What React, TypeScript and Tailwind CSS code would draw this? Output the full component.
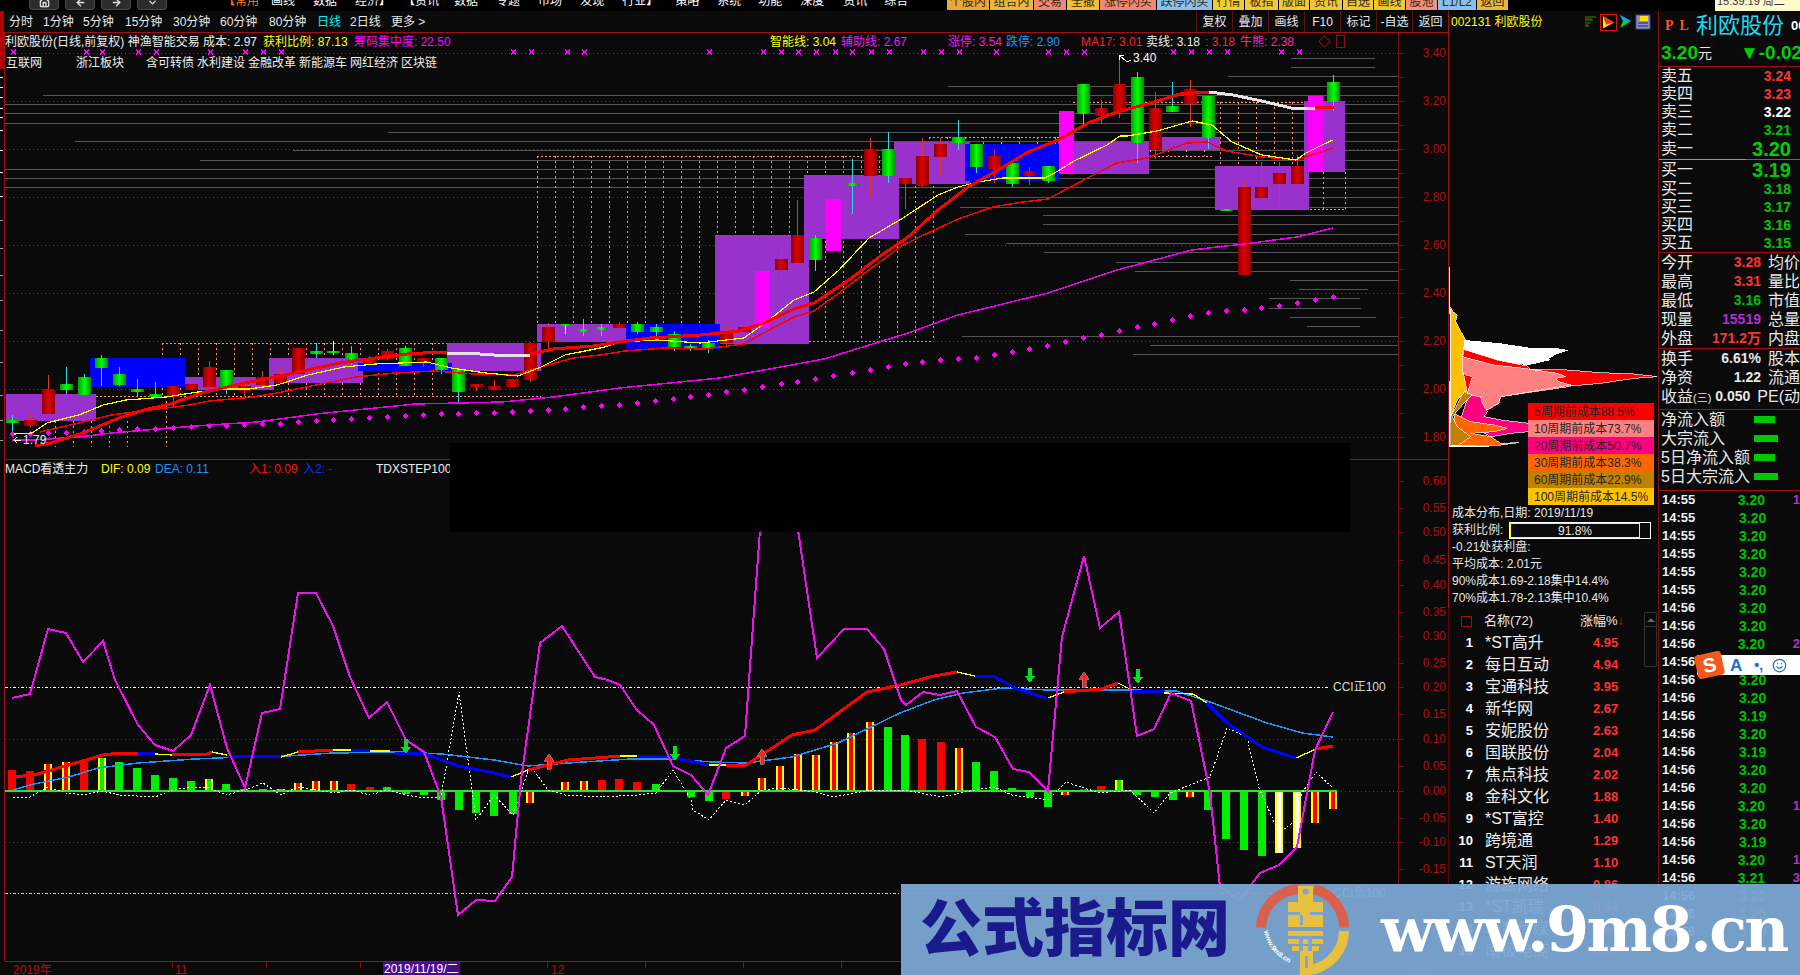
import { House, Smile, ArrowLeft, ArrowRight, ChevronDown } from "lucide-react";

type Pt = [number, number];

const line = (p: Pt[]) => p.map((q) => q.join(",")).join(" ");

// x, high, top, bottom, low, colour
const candles: [number, number, number, number, number, string][] = [
  [12, 415, 420, 423, 433, "g"], [30, 414, 420, 426, 427, "r"], [48, 375, 389, 414, 414, "r"],
  [66, 367, 384, 390, 394, "g"], [84, 374, 377, 395, 395, "g"], [101, 355, 358, 368, 386, "g"],
  [119, 367, 374, 385, 386, "g"], [137, 379, 389, 392, 396, "g"], [155, 382, 394, 397, 397, "g"],
  [173, 386, 386, 397, 406, "r"], [191, 380, 384, 390, 390, "r"], [209, 361, 367, 387, 387, "r"],
  [226, 370, 370, 389, 394, "g"], [244, 386, 386, 391, 397, "r"], [262, 371, 377, 385, 385, "r"],
  [280, 368, 374, 383, 383, "r"], [298, 348, 348, 374, 374, "r"], [316, 343, 351, 354, 358, "g"],
  [333, 341, 351, 352, 355, "w"], [351, 346, 353, 359, 365, "g"], [369, 356, 359, 364, 364, "r"],
  [387, 349, 351, 359, 360, "r"], [405, 346, 348, 366, 366, "g"], [423, 358, 358, 363, 367, "r"],
  [441, 358, 358, 370, 374, "g"], [458, 370, 370, 392, 403, "g"], [476, 384, 384, 387, 391, "r"],
  [494, 380, 386, 390, 390, "r"], [512, 379, 379, 387, 387, "r"], [530, 342, 343, 380, 382, "r"],
  [548, 323, 327, 342, 352, "r"], [565, 324, 324, 325, 334, "w"], [583, 319, 329, 332, 336, "g"],
  [601, 324, 327, 330, 336, "g"], [619, 322, 324, 328, 332, "r"], [637, 322, 324, 332, 334, "g"],
  [656, 324, 327, 332, 336, "g"], [674, 331, 334, 347, 351, "g"], [690, 344, 346, 348, 351, "g"],
  [708, 340, 343, 348, 353, "g"], [726, 325, 331, 343, 347, "r"], [744, 325, 327, 332, 332, "r"],
  [762, 271, 271, 328, 328, "m"], [781, 248, 259, 270, 279, "r"], [797, 200, 235, 263, 269, "r"],
  [815, 235, 238, 260, 271, "g"], [833, 199, 199, 251, 251, "m"], [852, 159, 183, 186, 214, "g"],
  [870, 138, 149, 176, 197, "r"], [888, 132, 149, 176, 183, "g"], [905, 172, 178, 184, 209, "r"],
  [922, 138, 156, 186, 187, "r"], [940, 138, 144, 157, 175, "r"], [958, 120, 137, 143, 150, "g"],
  [976, 144, 144, 167, 173, "g"], [994, 150, 156, 169, 183, "r"], [1012, 163, 163, 184, 187, "g"],
  [1029, 167, 171, 176, 185, "r"], [1048, 166, 166, 181, 183, "g"], [1066, 111, 111, 174, 174, "m"],
  [1083, 84, 84, 114, 124, "g"], [1101, 100, 108, 116, 124, "r"], [1119, 55, 84, 112, 118, "r"],
  [1137, 72, 77, 143, 163, "g"], [1155, 92, 108, 150, 159, "r"], [1172, 82, 106, 112, 112, "g"],
  [1190, 80, 89, 104, 127, "r"], [1208, 96, 96, 138, 149, "g"], [1226, 209, 209, 210, 210, "g"],
  [1244, 181, 187, 275, 275, "r"], [1261, 162, 187, 198, 204, "r"], [1279, 162, 173, 184, 207, "r"],
  [1297, 155, 166, 184, 187, "r"], [1315, 96, 96, 172, 172, "m"], [1333, 75, 82, 102, 111, "g"],
];

const purpleBoxes: [number, number, number, number][] = [
  [6, 394, 96, 421], [185, 377, 274, 390], [269, 358, 363, 383], [447, 343, 541, 371], [537, 324, 626, 342],
  [715, 235, 809, 344], [804, 175, 899, 239], [894, 142, 970, 184], [1058, 142, 1149, 174],
  [1149, 137, 1220, 150], [1215, 166, 1309, 210], [1304, 101, 1345, 172],
];
const blueBoxes: [number, number, number, number][] = [
  [90, 358, 185, 387], [358, 363, 452, 371], [626, 324, 720, 349], [965, 144, 1059, 181],
];

const greyLines: [number, number, number?][] = [
  [58, 1291, 1375], [67, 1291, 1375], [76, 1228], [86, 948], [95, 43], [104, 5], [113, 5], [123, 5], [132, 388],
  [141, 75], [150, 293], [160, 200], [169, 5], [178, 5], [187, 5], [197, 990], [207, 960], [215, 1043], [224, 1043],
  [234, 965], [243, 1006], [252, 1044], [262, 1116], [271, 1135], [280, 1290], [289, 1299, 1368], [298, 1269, 1360],
  [308, 1269, 1361], [317, 1290, 1376], [326, 1307, 1360], [336, 962], [345, 1150], [354, 1133],
];

const maThick: Pt[] = [
  [35, 446], [51, 443], [83, 433], [119, 418], [144, 410], [170, 404], [205, 392], [245, 383], [285, 375], [316, 368],
  [340, 363], [375, 358], [407, 354], [439, 352], [447, 353],
];
const maThick2: Pt[] = [
  [530, 354], [553, 349], [593, 346], [620, 342], [650, 338], [700, 335], [739, 331], [764, 323], [794, 309], [814, 303],
  [849, 280], [879, 257], [908, 237], [938, 210], [968, 187], [998, 170], [1028, 152], [1058, 140], [1088, 123],
  [1117, 112], [1151, 103], [1180, 94], [1209, 92],
];
const maWhite1: Pt[] = [[447, 353], [476, 353], [480, 354], [494, 355], [530, 355]];
const maWhite2: Pt[] = [[1209, 92], [1233, 95], [1262, 101], [1291, 108], [1315, 108]];

const maYellow: Pt[] = [
  [14, 434], [32, 433], [47, 423], [79, 415], [103, 405], [126, 400], [166, 397], [198, 392], [221, 389], [249, 389],
  [277, 385], [308, 375], [344, 367], [375, 364], [427, 362], [451, 368], [486, 373], [518, 376], [541, 367], [565, 355],
  [605, 347], [620, 342], [657, 340], [700, 343], [744, 338], [769, 320], [794, 300], [814, 292], [839, 270], [869, 238],
  [903, 218], [938, 195], [958, 187], [978, 182], [1003, 178], [1045, 178], [1058, 171], [1074, 161], [1107, 145],
  [1120, 136], [1127, 136], [1157, 131], [1192, 121], [1212, 125], [1232, 142], [1262, 155], [1296, 160], [1306, 153],
  [1324, 144], [1333, 140],
];
const maRed: Pt[] = [
  [40, 432], [79, 423], [111, 415], [134, 412], [166, 408], [190, 405], [209, 401], [253, 397], [277, 393], [316, 385],
  [356, 377], [395, 373], [435, 371], [474, 374], [514, 375], [541, 367], [573, 358], [600, 355], [625, 351], [665, 348],
  [704, 349], [744, 344], [769, 330], [794, 317], [814, 311], [839, 293], [869, 270], [903, 245], [928, 233], [958, 219],
  [993, 207], [1023, 202], [1048, 199], [1078, 183], [1117, 163], [1147, 158], [1187, 143], [1207, 142], [1227, 151],
  [1262, 157], [1296, 160], [1333, 148],
];
const maPurple: Pt[] = [
  [12, 440], [32, 440], [79, 437], [111, 433], [170, 428], [209, 425], [257, 422], [316, 414], [415, 404], [502, 402],
  [553, 397], [620, 388], [720, 378], [824, 359], [908, 333], [958, 315], [1048, 293], [1117, 270], [1192, 250],
  [1252, 243], [1297, 237], [1333, 228],
];

const dots: Pt[] = [
  [12, 434], [30, 434], [48, 433], [66, 433], [84, 432], [101, 431], [119, 430], [137, 429], [155, 429], [173, 428],
  [191, 427], [209, 426], [226, 426], [244, 425], [262, 424], [280, 424], [298, 422], [316, 421], [333, 420], [351, 419],
  [369, 418], [387, 417], [405, 416], [423, 415], [441, 414], [458, 414], [476, 413], [494, 413], [512, 412], [530, 411],
  [548, 410], [565, 409], [583, 407], [601, 406], [619, 405], [637, 403], [655, 401], [673, 399], [690, 397], [708, 395],
  [726, 392], [744, 390], [762, 387], [781, 384], [797, 382], [815, 379], [833, 376], [852, 373], [870, 370], [888, 367],
  [905, 364], [922, 362], [940, 360], [958, 359], [976, 358], [994, 355], [1012, 352], [1029, 349], [1047, 346],
  [1065, 342], [1083, 338], [1101, 335], [1119, 331], [1137, 327], [1154, 324], [1172, 320], [1190, 316], [1208, 313],
  [1226, 311], [1244, 310], [1261, 308], [1279, 306], [1297, 303], [1315, 300], [1333, 297],
];

const xMarks = [13, 86, 102, 138, 156, 210, 245, 263, 281, 513, 531, 567, 584, 709, 763, 781, 798, 816, 835, 852, 871, 889, 923, 941, 959, 996, 1048, 1066, 1084, 1173, 1191, 1209, 1227, 1281, 1299];

// x, y end of bar, kind: g green, r red, y red with yellow sides, l green with yellow sides, w white with yellow sides
const macdBars: [number, number, string][] = [
  [12, 770, "r"], [30, 771, "r"], [48, 764, "y"], [66, 762, "y"], [84, 762, "r"], [102, 758, "l"], [119, 762, "g"], [137, 768, "g"],
  [155, 775, "g"], [173, 778, "g"], [191, 781, "g"], [209, 779, "l"], [226, 784, "g"], [244, 789, "g"], [263, 789, "g"], [281, 789, "l"],
  [298, 783, "y"], [316, 781, "y"], [334, 781, "y"], [351, 784, "r"], [370, 787, "r"], [387, 787, "g"], [406, 794, "g"], [424, 795, "g"],
  [441, 800, "g"], [459, 810, "g"], [476, 813, "g"], [494, 816, "g"], [513, 814, "g"], [530, 803, "y"], [548, 790, "y"], [565, 782, "y"],
  [584, 781, "y"], [602, 780, "r"], [619, 779, "r"], [637, 782, "r"], [656, 784, "g"], [691, 797, "g"], [709, 801, "g"], [726, 799, "r"],
  [745, 796, "y"], [762, 778, "y"], [780, 766, "y"], [798, 754, "y"], [816, 755, "y"], [834, 742, "y"], [851, 733, "y"], [870, 722, "y"],
  [888, 727, "g"], [905, 735, "g"], [922, 739, "r"], [941, 742, "r"], [959, 748, "y"], [976, 762, "g"], [994, 771, "g"], [1012, 788, "g"],
  [1030, 797, "g"], [1048, 807, "g"], [1065, 795, "y"], [1084, 789, "r"], [1101, 786, "r"], [1119, 780, "l"], [1137, 795, "g"], [1155, 797, "g"],
  [1173, 800, "g"], [1190, 797, "y"], [1208, 810, "g"], [1226, 839, "g"], [1244, 850, "g"], [1262, 856, "g"], [1279, 853, "w"], [1297, 848, "w"],
  [1315, 823, "y"], [1333, 809, "y"],
];

const cciLine: Pt[] = [
  [12, 698], [30, 694], [48, 629], [66, 633], [83, 662], [103, 641], [115, 680], [138, 725], [155, 745], [173, 751], [191, 735], [210, 685],
  [227, 748], [245, 788], [262, 713], [280, 709], [298, 593], [316, 593], [333, 626], [350, 677], [369, 718], [387, 702], [406, 740], [424, 752],
  [441, 797], [458, 915], [476, 900], [495, 901], [512, 877], [521, 780], [540, 643], [562, 626], [595, 677], [608, 680], [620, 685], [637, 710],
  [654, 725], [673, 766], [691, 775], [708, 795], [726, 748], [745, 736], [749, 680], [760, 530], [798, 530], [817, 658], [844, 629], [867, 629],
  [884, 649], [901, 700], [906, 705], [923, 692], [940, 695], [957, 691], [976, 727], [995, 737], [1013, 769], [1029, 772], [1048, 791],
  [1062, 637], [1084, 556], [1100, 628], [1119, 612], [1137, 736], [1154, 729], [1171, 693], [1191, 701], [1210, 793], [1220, 887],
  [1240, 900], [1260, 873], [1279, 865], [1297, 847], [1315, 750], [1333, 712],
];
const deaLine: Pt[] = [
  [13, 790], [34, 784], [69, 777], [98, 768], [138, 763], [195, 759], [241, 757], [287, 756], [333, 753], [402, 752], [442, 754], [494, 760],
  [528, 766], [568, 763], [631, 759], [672, 759], [712, 762], [746, 763], [792, 757], [838, 743], [900, 713], [934, 700], [963, 693], [1003, 688],
  [1049, 690], [1130, 690], [1176, 691], [1210, 702], [1267, 723], [1302, 733], [1333, 737],
];
const difSegments: [string, Pt[]][] = [
  ["#ff0000", [[13, 777], [34, 775], [86, 760], [103, 755], [120, 753], [138, 753]]],
  ["#0000ff", [[138, 753], [155, 754]]],
  ["#ffff00", [[155, 754], [172, 755]]],
  ["#ff0000", [[172, 755], [207, 754], [212, 752]]],
  ["#ffff00", [[212, 752], [227, 755]]],
  ["#0000ff", [[227, 756], [281, 757]]],
  ["#ffff00", [[281, 757], [298, 752]]],
  ["#ff0000", [[298, 752], [333, 750]]],
  ["#ffff00", [[333, 750], [351, 750]]],
  ["#0000ff", [[351, 750], [370, 751]]],
  ["#ffff00", [[370, 751], [390, 751]]],
  ["#0000ff", [[395, 753], [425, 754], [459, 766], [494, 773], [511, 777]]],
  ["#ffff00", [[511, 777], [528, 770]]],
  ["#ff0000", [[528, 770], [568, 760], [608, 757], [620, 756]]],
  ["#ffff00", [[620, 756], [637, 756]]],
  ["#0000ff", [[637, 756], [666, 756], [709, 765]]],
  ["#ffff00", [[709, 765], [726, 765]]],
  ["#ff0000", [[726, 765], [746, 765], [792, 735], [815, 730], [867, 692], [900, 685], [934, 676], [957, 672]]],
  ["#ffff00", [[957, 672], [975, 676]]],
  ["#0000ff", [[975, 676], [995, 677], [1015, 688], [1046, 698]]],
  ["#ffff00", [[1048, 698], [1064, 692]]],
  ["#ff0000", [[1064, 692], [1101, 689], [1118, 683]]],
  ["#ffff00", [[1118, 683], [1132, 690]]],
  ["#0000ff", [[1132, 691], [1164, 692]]],
  ["#ffff00", [[1164, 693], [1193, 694], [1207, 703]]],
  ["#0000ff", [[1207, 703], [1227, 723], [1262, 747], [1296, 758]]],
  ["#ffff00", [[1296, 758], [1316, 749]]],
  ["#ff0000", [[1316, 749], [1333, 746]]],
];
const whiteDash: Pt[] = [
  [13, 797], [30, 797], [48, 787], [66, 793], [84, 795], [102, 791], [119, 795], [155, 797], [173, 790], [191, 787], [209, 788], [226, 795], [245, 790],
  [263, 783], [281, 795], [298, 787], [334, 793], [351, 790], [370, 795], [387, 790], [406, 795], [424, 798], [441, 797], [459, 692], [476, 820],
  [494, 795], [513, 815], [530, 765], [548, 790], [565, 795], [602, 797], [637, 795], [656, 793], [673, 770], [691, 800], [693, 810], [709, 820], [726, 800],
  [745, 805], [762, 790], [780, 788], [816, 792], [834, 797], [870, 790], [905, 790], [941, 797], [975, 790], [994, 787], [1012, 795], [1048, 800],
  [1066, 782], [1084, 788], [1100, 793], [1130, 790], [1154, 813], [1170, 793], [1210, 777], [1227, 728], [1247, 737], [1259, 788], [1279, 833],
  [1296, 820], [1302, 793], [1316, 772], [1333, 788],
];

const yLabelsTop = ["3.40", "3.20", "3.00", "2.80", "2.60", "2.40", "2.20", "2.00", "1.80"];
const yLabelsLow: [string, number][] = [
  ["0.60", 481], ["0.55", 508], ["0.50", 532], ["0.45", 560], ["0.40", 585], ["0.35", 612], ["0.30", 636], ["0.25", 663], ["0.20", 687], ["0.15", 714],
  ["0.10", 739], ["0.05", 766], ["0.00", 791], ["-0.05", 818], ["-0.10", 842], ["-0.15", 869],
];
const edgeTicks = [77, 87, 97, 108, 117, 130, 150, 172, 196, 220, 248, 275, 300, 330, 362, 395, 420, 440];

function Frame({ x0, x1, y0, y1, step, top, bottom }: { x0: number; x1: number; y0: number; y1: number; step: number; top?: [number, number]; bottom?: [number, number] }) {
  const xs: number[] = [];
  for (let x = x0; x <= x1; x += step) xs.push(x);
  return (
    <g stroke="#ff8f78" fill="none">
      {xs.map((x) => (
        <line key={x} x1={x + 0.5} x2={x + 0.5} y1={y0} y2={y1} strokeDasharray="2 3" />
      ))}
      {top && <line x1={top[0]} x2={top[1]} y1={y0 + 0.5} y2={y0 + 0.5} strokeDasharray="2 2" />}
      {bottom && <line x1={bottom[0]} x2={bottom[1]} y1={y1 + 0.5} y2={y1 + 0.5} strokeDasharray="2 2" />}
    </g>
  );
}

function Arrow({ x, y, up }: { x: number; y: number; up?: boolean }) {
  const c = up ? "#ff2020" : "#00e020";
  const d = up ? `M${x} ${y - 8}L${x + 5} ${y - 1}H${x + 2}V${y + 7}H${x - 2}V${y - 1}H${x - 5}Z` : `M${x} ${y + 8}L${x + 5} ${y + 1}H${x + 2}V${y - 7}H${x - 2}V${y + 1}H${x - 5}Z`;
  return <path d={d} fill={c} stroke={up ? "#999" : "none"} strokeWidth="0.7" />;
}

function ChartSvg() {
  return (
    <svg className="absolute left-0 top-0" width="1449" height="942" viewBox="0 33 1449 942" shapeRendering="crispEdges">
      <defs>
        <linearGradient id="redBody" x1="0" x2="1" y1="0" y2="0">
          <stop offset="0" stopColor="#8a0000" />
          <stop offset="0.45" stopColor="#e00000" />
          <stop offset="1" stopColor="#900000" />
        </linearGradient>
        <linearGradient id="greenBody" x1="0" x2="1" y1="0" y2="0">
          <stop offset="0" stopColor="#00a000" />
          <stop offset="0.5" stopColor="#00ff00" />
          <stop offset="1" stopColor="#009000" />
        </linearGradient>
      </defs>

      {/* price grid */}
      {yLabelsTop.map((l, i) => (
        <line key={l} x1="5" x2="1398" y1={53 + i * 48 + 0.5} y2={53 + i * 48 + 0.5} stroke="#a82020" strokeDasharray="1 3" />
      ))}
      {greyLines.map(([y, a, b]) => (
        <line key={y} x1={a} x2={b ?? 1398} y1={y + 0.5} y2={y + 0.5} stroke="#555555" />
      ))}

      <Frame x0={162} x1={447} y0={343} y1={396} step={18} top={[162, 447]} bottom={[96, 541]} />
      <Frame x0={55} x1={144} y0={421} y1={447} step={18} />
      <line x1="166.5" x2="166.5" y1="396" y2="447" stroke="#ff8f78" strokeDasharray="2 3" />
      <Frame x0={537} x1={933} y0={156} y1={341} step={18} top={[537, 862]} bottom={[809, 933]} />
      <Frame x0={929} x1={1059} y0={137} y1={144} step={18} top={[929, 1059]} />
      <Frame x0={1150} x1={1214} y0={150} y1={156} step={18} bottom={[1150, 1214]} />
      <Frame x0={1220} x1={1310} y0={102} y1={166} step={18} top={[1073, 1310]} />
      <Frame x0={1323} x1={1345} y0={172} y1={209} step={22} bottom={[1310, 1345]} />

      {purpleBoxes.map(([x0, y0, x1, y1]) => (
        <rect key={x0} x={x0} y={y0} width={x1 - x0} height={y1 - y0} fill="#9932cc" />
      ))}
      {blueBoxes.map(([x0, y0, x1, y1]) => (
        <rect key={x0} x={x0} y={y0} width={x1 - x0} height={y1 - y0} fill="#0000ff" />
      ))}

      {candles.map(([x, h, t, b, l, c]) => {
        if (c === "m") return <rect key={x} x={x - 7.5} y={t} width={15} height={b - t} fill="#ff00ff" />;
        const wick = c === "g" ? "#30d8e8" : c === "r" ? "#e03820" : "#ffffff";
        const fill = c === "r" ? "url(#redBody)" : "url(#greenBody)";
        return (
          <g key={x}>
            <line x1={x + 0.5} x2={x + 0.5} y1={h} y2={l} stroke={wick} />
            <rect x={x - 6} y={t} width={13} height={Math.max(b - t, 2)} fill={fill} />
          </g>
        );
      })}

      <polyline points={line(maPurple)} fill="none" stroke="#ee00ee" strokeWidth="1.5" />
      {dots.map(([x, y]) => (
        <path key={x} d={`M${x + 0.5} ${y - 3}L${x + 3} ${y}L${x + 0.5} ${y + 3}L${x - 2} ${y}Z`} fill="#ff00ff" />
      ))}
      <polyline points={line(maRed)} fill="none" stroke="#ff0000" strokeWidth="1.5" />
      <polyline points={line(maYellow)} fill="none" stroke="#ffff00" strokeWidth="1.2" />
      <polyline points={line(maThick)} fill="none" stroke="#ff0000" strokeWidth="3" />
      <polyline points={line(maWhite1)} fill="none" stroke="#e4e4e4" strokeWidth="3" />
      <polyline points={line(maThick2)} fill="none" stroke="#ff0000" strokeWidth="3" />
      <polyline points={line(maWhite2)} fill="none" stroke="#e4e4e4" strokeWidth="3" />
      <line x1="1315" x2="1334" y1="107" y2="107" stroke="#ff0000" strokeWidth="3" />

      {xMarks.map((x) => (
        <path key={x} d={`M${x - 2} 49.5l5 5m0 -5l-5 5`} stroke="#ff00ff" strokeWidth="1.4" fill="none" />
      ))}

      <path d="M1119 55l5 1M1119 55l1 5M1119 55l8 7l4 -2" stroke="#fff" fill="none" />
      <text x="1133" y="62" fontSize="12" fill="#fff">3.40</text>
      <path d="M14 440h7M14 440l3 -3M14 440l3 3" stroke="#fff" fill="none" />
      <text x="23" y="444" fontSize="12" fill="#e8e8e8">1.79</text>

      {edgeTicks.map((y) => (
        <line key={y} x1="0" x2="3" y1={y + 0.5} y2={y + 0.5} stroke={y < 200 ? "#f0f0f0" : "#a0a0a0"} />
      ))}

      {/* axis */}
      <line x1="1398.5" x2="1398.5" y1="32" y2="961" stroke="#7a1010" />
      {Array.from({ length: 17 }, (_, i) => (
        <line key={i} x1="1398" x2="1404" y1={53 + i * 24 + 0.5} y2={53 + i * 24 + 0.5} stroke="#7a1010" />
      ))}
      {yLabelsTop.map((l, i) => (
        <text key={l} x="1446" y={57 + i * 48} fontSize="12" fill="#b01010" textAnchor="end">{l}</text>
      ))}
      <line x1="1448.5" x2="1448.5" y1="32" y2="608" stroke="#a01010" strokeWidth="2" />
      <line x1="1448" x2="1448" y1="608" y2="975" stroke="#600808" />
      <line x1="4.5" x2="4.5" y1="32" y2="961" stroke="#a01010" />
      <line x1="5" x2="1449" y1="459.5" y2="459.5" stroke="#a01010" />

      {/* macd pane */}
      {[739, 842, 791].map((y) => (
        <line key={y} x1="5" x2="1398" y1={y + 0.5} y2={y + 0.5} stroke="#a82020" strokeDasharray="1 3" />
      ))}
      <line x1="5" x2="1330" y1="687.5" y2="687.5" stroke="#ffffff" strokeDasharray="3 2 1 2" />
      <line x1="5" x2="1330" y1="893.5" y2="893.5" stroke="#d8c8c8" strokeDasharray="3 2 1 2" />
      {yLabelsLow.map(([l, y]) => (
        <g key={l}>
          <line x1="1398" x2="1404" y1={y + 0.5} y2={y + 0.5} stroke="#7a1010" />
          <text x="1446" y={y + 4} fontSize="12" fill="#b01010" textAnchor="end">{l}</text>
        </g>
      ))}
      <text x="1333" y="691" fontSize="12" fill="#d8d8d8">CCI正100</text>
      <text x="1333" y="897" fontSize="12" fill="#d8d8d8">CCI负100</text>

      {macdBars.map(([x, y, k]) => {
        const top = Math.min(y, 791);
        const h = Math.abs(y - 791);
        const side = k === "y" || k === "l" || k === "w";
        const core = k === "g" || k === "l" ? "#00ee00" : k === "w" ? "#ffffff" : "#ff0000";
        return (
          <g key={x}>
            {side && <rect x={x - 4} y={top} width={8} height={h} fill="#ffff00" />}
            <rect x={side ? x - 2 : x - 4} y={top} width={side ? 4 : 8} height={h} fill={core} />
          </g>
        );
      })}
      <line x1="5" x2="1337" y1="791" y2="791" stroke="#30e030" strokeWidth="2" />
      <polyline points={line(whiteDash)} fill="none" stroke="#ffffff" strokeDasharray="2 2" strokeWidth="1" />
      <polyline points={line(deaLine)} fill="none" stroke="#1e90ff" strokeWidth="1.5" />
      {difSegments.map(([c, p], i) => (
        <polyline key={i} points={line(p)} fill="none" stroke={c} strokeWidth={c === "#ffff00" ? 1.3 : 3} />
      ))}
      <polyline points={line(cciLine)} fill="none" stroke="#f010f0" strokeWidth="2" />
      <Arrow x={406} y={746} />
      <Arrow x={675} y={753} />
      <Arrow x={1030} y={675} />
      <Arrow x={1138} y={676} />
      <Arrow x={549} y={762} up />
      <Arrow x={762} y={757} up />
      <Arrow x={1084} y={680} up />

      {/* time axis */}
      <line x1="5" x2="1398" y1="961.5" y2="961.5" stroke="#a01010" />
      {[172, 266, 360, 547, 645, 743, 841, 1000, 1200].map((x) => (
        <line key={x} x1={x} x2={x} y1="961" y2="968" stroke="#8a1010" />
      ))}
      <rect x="383" y="962" width="77" height="13" fill="#4b0c8c" />
      <text x="384" y="973" fontSize="12" fill="#ffffff">2019/11/19/二</text>
      <text x="13" y="974" fontSize="12" fill="#b01010">2019年</text>
      <text x="175" y="974" fontSize="12" fill="#b01010">11</text>
      <text x="551" y="974" fontSize="12" fill="#b01010">12</text>
      <text x="1410" y="972" fontSize="12" fill="#9a2020">日线</text>
    </svg>
  );
}

function TopMenu() {
  const left = [
    { x: "ml-[223px]", t: "【常用", c: "text-[#ff7a1a]" },
    { x: "ml-[12px]", t: "画线", c: "text-white" },
    { x: "ml-[18px]", t: "数据", c: "text-white" },
    { x: "ml-[18px]", t: "经济】", c: "text-white" },
    { x: "ml-[12px]", t: "【资讯", c: "text-white" },
    { x: "ml-[15px]", t: "数据", c: "text-white" },
    { x: "ml-[18px]", t: "专题", c: "text-white" },
    { x: "ml-[18px]", t: "市场", c: "text-white" },
    { x: "ml-[18px]", t: "发现", c: "text-white" },
    { x: "ml-[18px]", t: "行业】", c: "text-white" },
    { x: "ml-[17px]", t: "策略", c: "text-white" },
    { x: "ml-[18px]", t: "系统", c: "text-white" },
    { x: "ml-[17px]", t: "功能", c: "text-white" },
    { x: "ml-[18px]", t: "深度", c: "text-white" },
    { x: "ml-[19px]", t: "资讯", c: "text-white" },
    { x: "ml-[17px]", t: "综合", c: "text-white" },
  ];
  const chips = [
    { t: "个股内", w: "w-[42px]", c: "bg-[#e8a838]" },
    { t: "组合内", w: "w-[43px]", c: "bg-[#e8b840]" },
    { t: "交易", w: "w-[32px]", c: "bg-[#f08878]" },
    { t: "全撤", w: "w-[32px]", c: "bg-[#f0c038]" },
    { t: "涨停闪买", w: "w-[56px]", c: "bg-[#f08878]" },
    { t: "跌停闪买", w: "w-[55px]", c: "bg-[#88c0f0]" },
    { t: "行情", w: "w-[31px]", c: "bg-[#f0d030]" },
    { t: "板指", w: "w-[33px]", c: "bg-[#f0c838]" },
    { t: "版面", w: "w-[30px]", c: "bg-[#f0c838]" },
    { t: "资讯", w: "w-[32px]", c: "bg-[#f0c838]" },
    { t: "自选", w: "w-[30px]", c: "bg-[#f0c838]" },
    { t: "画线", w: "w-[31px]", c: "bg-[#f0c838]" },
    { t: "股池", w: "w-[31px]", c: "bg-[#f09080]" },
    { t: "L1/L2", w: "w-[38px]", c: "bg-[#88c0f0]" },
    { t: "返回", w: "w-[31px]", c: "bg-[#e8b840]" },
  ];
  const buttons = [House, ArrowLeft, ArrowRight, ChevronDown];
  return (
    <div className="relative flex h-[11px] items-start overflow-hidden bg-black">
      <div className="absolute left-[29px] top-0 flex gap-[6px]">
        {buttons.map((Icon, i) => (
          <div key={i} className="flex h-[10px] w-[30px] items-end justify-center rounded-b-[4px] border border-t-0 border-[#4a4a4a] bg-[#2c2c2c]">
            <Icon className="mb-[1px] h-[11px] w-[11px] text-[#e0e0e0]" strokeWidth={3} />
          </div>
        ))}
      </div>
      <div className="flex w-[947px] -mt-[5px] text-[12px] leading-[12px]">
        {left.map((m) => (
          <span key={m.t + m.x} className={`${m.x} ${m.c} whitespace-nowrap`}>
            {m.t}
          </span>
        ))}
      </div>
      <div className="flex gap-[1px]">
        {chips.map((c) => (
          <div key={c.t} className={`${c.w} ${c.c} flex h-[10px] justify-center overflow-hidden text-[12px] leading-[12px] text-[#3a2a00]`}>
            <span className="-mt-[4px] whitespace-nowrap">{c.t}</span>
          </div>
        ))}
      </div>
      <div className="ml-auto flex h-[11px] w-[85px] overflow-hidden bg-[#fff8c8] pl-[2px] text-[11px] leading-[12px] text-[#333]">
        <span className="-mt-[5px] whitespace-nowrap">15:39:19 周二</span>
      </div>
    </div>
  );
}

function Toolbar() {
  const periods = [
    { t: "分时", w: "w-[34px]" },
    { t: "1分钟", w: "w-[40px]" },
    { t: "5分钟", w: "w-[42px]" },
    { t: "15分钟", w: "w-[48px]" },
    { t: "30分钟", w: "w-[47px]" },
    { t: "60分钟", w: "w-[49px]" },
    { t: "80分钟", w: "w-[48px]" },
    { t: "日线", w: "w-[33px]", c: "text-[#00f0f0]" },
    { t: "2日线", w: "w-[41px]" },
    { t: "更多 >", w: "w-[44px]" },
  ];
  const tools = ["复权", "叠加", "画线", "F10", "标记", "-自选", "返回"];
  return (
    <div className="flex h-[22px] items-center border-b border-[#a01010] pl-[9px] text-[12px] text-[#e8e8e8]">
      {periods.map((p) => (
        <span key={p.t} className={`${p.w} ${p.c ?? ""} whitespace-nowrap`}>
          {p.t}
        </span>
      ))}
      <div className="ml-auto flex h-full">
        {tools.map((t) => (
          <span key={t} className="flex h-full w-[36px] items-center justify-center border-l border-[#5a1010]">
            {t}
          </span>
        ))}
        <span className="h-full border-l border-[#a01010]" />
      </div>
    </div>
  );
}

function ChartLegends() {
  const row1 = [
    { t: "利欧股份(日线,前复权) 神渔智能交易 成本: 2.97", w: "w-[258px]", c: "text-[#eeeeee]" },
    { t: "获利比例: 87.13", w: "w-[91px]", c: "text-[#ffff00]" },
    { t: "筹码集中度: 22.50", w: "w-[416px]", c: "text-[#ff00ff]" },
    { t: "智能线: 3.04", w: "w-[71px]", c: "text-[#ffff00]" },
    { t: "辅助线: 2.67", w: "w-[107px]", c: "text-[#e820e8]" },
    { t: "涨停: 3.54", w: "w-[58px]", c: "text-[#e820e8]" },
    { t: "跌停: 2.90", w: "w-[75px]", c: "text-[#1e90ff]" },
    { t: "MA17: 3.01", w: "w-[65px]", c: "text-[#ff2020]" },
    { t: "卖线: 3.18", w: "w-[59px]", c: "text-[#eeeeee]" },
    { t: ": 3.18", w: "w-[35px]", c: "text-[#ff2020]" },
    { t: "牛熊: 2.38", w: "w-[80px]", c: "text-[#f030b0]" },
  ];
  const tags = [
    { t: "互联网", w: "w-[70px]" },
    { t: "浙江板块", w: "w-[70px]" },
    { t: "含可转债", w: "w-[51px]" },
    { t: "水利建设", w: "w-[51px]" },
    { t: "金融改革", w: "w-[51px]" },
    { t: "新能源车", w: "w-[51px]" },
    { t: "网红经济", w: "w-[51px]" },
    { t: "区块链", w: "w-[40px]" },
  ];
  const row2 = [
    { t: "MACD看透主力", w: "w-[96px]", c: "text-[#eeeeee]" },
    { t: "DIF: 0.09", w: "w-[54px]", c: "text-[#ffff00]" },
    { t: "DEA: 0.11", w: "w-[94px]", c: "text-[#1e90ff]" },
    { t: "入1: 0.09", w: "w-[54px]", c: "text-[#ff1010]" },
    { t: "入2: -", w: "w-[73px]", c: "text-[#1030ff]" },
    { t: "TDXSTEP100", w: "w-[80px]", c: "text-[#eeeeee]" },
  ];
  return (
    <>
      <div className="relative flex h-[17px] items-center pl-[5px] text-[12px]">
        {row1.map((r) => (
          <span key={r.t} className={`${r.w} ${r.c} whitespace-nowrap`}>
            {r.t}
          </span>
        ))}
        <span className="h-[9px] w-[9px] rotate-45 border border-[#901010]" />
        <span className="ml-[7px] h-[13px] w-[9px] border border-[#901010]" />
      </div>
      <div className="relative mt-[4px] flex h-[17px] items-center pl-[6px] text-[12px] text-[#eeeeee]">
        {tags.map((t) => (
          <span key={t.t} className={`${t.w} whitespace-nowrap`}>
            {t.t}
          </span>
        ))}
      </div>
      <div className="relative mt-[389px] flex h-[17px] items-center pl-[5px] text-[12px]">
        {row2.map((r) => (
          <span key={r.t} className={`${r.w} ${r.c} whitespace-nowrap`}>
            {r.t}
          </span>
        ))}
      </div>
    </>
  );
}

function ChipPanel() {
  const legend = [
    { t: "5周期前成本88.5%", c: "bg-[#ff0000]" },
    { t: "10周期前成本73.7%", c: "bg-[#ff8080]" },
    { t: "20周期前成本50.7%", c: "bg-[#ff0080]" },
    { t: "30周期前成本38.3%", c: "bg-[#ff6600]" },
    { t: "60周期前成本22.9%", c: "bg-[#c08000]" },
    { t: "100周期前成本14.5%", c: "bg-[#ffc000]" },
  ];
  const list: [string, string, string][] = [
    ["1", "*ST高升", "4.95"], ["2", "每日互动", "4.94"], ["3", "宝通科技", "3.95"], ["4", "新华网", "2.67"],
    ["5", "安妮股份", "2.63"], ["6", "国联股份", "2.04"], ["7", "焦点科技", "2.02"], ["8", "金科文化", "1.88"],
    ["9", "*ST富控", "1.40"], ["10", "跨境通", "1.29"], ["11", "ST天润", "1.10"], ["12", "游族网络", "0.86"],
    ["13", "*ST凯瑞", "0.84"], ["14", "华数传媒", "0.80"], ["15", "南极电商", "0.75"],
  ];
  return (
    <div className="relative w-[209px] shrink-0 overflow-hidden text-[12px] text-[#e8e8e8]">
      <div className="flex h-[22px] items-center pl-[2px] text-[12px] text-[#ffff00]">
        <span className="whitespace-nowrap">002131 利欧股份</span>
        {/* panel icons */}
        <svg className="ml-auto mr-[7px]" width="66" height="18" viewBox="0 0 66 18">
          <path d="M0 4h11M0 7h8M0 10h6M0 13h4" stroke="#0a9a0a" strokeWidth="1" />
          <path d="M0 6h7M0 12h3" stroke="#d02020" />
          <rect x="15.5" y="1.5" width="16" height="16" fill="#000" stroke="#e01010" />
          <path d="M18 3l11 6.5l-11 6z" fill="#ffe000" />
          <path d="M18 3l11 6.5l-8 2z" fill="#ff3010" />
          <path d="M35 2l11 6l-11 7l3 -7z" fill="#00e000" />
          <path d="M35 2l11 6h-8z" fill="#10a0ff" />
          <rect x="51" y="2" width="14" height="14" fill="#9090c0" stroke="#4040a0" />
          <rect x="55" y="3" width="8" height="5" fill="#ffe000" />
          <path d="M53 10h10M53 13h10" stroke="#202060" />
        </svg>
      </div>

      {/* chip distribution, in 3x reference units */}
      <svg className="absolute left-0 top-[245px]" width="209" height="192" viewBox="145 768 627 576" shapeRendering="crispEdges">
        <path d="M147 800V920L150 960L147 1340H265" fill="none" stroke="#fff" strokeWidth="4" />
        <polygon points="150,920 156,935 170,945 165,965 175,985 190,1010 195,1020 190,1040 185,1060 190,1085 185,1120 215,1130 205,1150 195,1175 170,1200 150,1250" fill="#ffc000" stroke="#fff" strokeWidth="2" />
        <polygon points="190,1020 300,1030 400,1045 470,1045 505,1050 470,1062 445,1075 450,1080 400,1092 380,1095 290,1085 190,1050" fill="#ffffff" />
        <polygon points="188,1048 290,1080 380,1098 390,1108 500,1110 600,1118 700,1122 770,1130 700,1135 600,1150 510,1158 490,1162 300,1190 200,1180 185,1100" fill="#ff0000" stroke="#fff" strokeWidth="2" />
        <polygon points="185,1070 280,1095 370,1105 470,1120 495,1130 465,1135 475,1145 510,1155 420,1170 300,1190 295,1210 260,1230 230,1200 200,1180 215,1130 195,1125 185,1115" fill="#ff8080" stroke="#fff" strokeWidth="2" />
        <polygon points="205,1185 240,1190 245,1210 260,1235 250,1250 300,1260 385,1270 385,1295 330,1300 270,1310 225,1285 180,1255" fill="#ff0080" stroke="#fff" strokeWidth="2" />
        <polygon points="160,1240 210,1265 280,1275 320,1285 280,1295 210,1300 270,1310 300,1330 355,1328 300,1335 150,1338 165,1290" fill="#ff6600" stroke="#fff" strokeWidth="2" />
        <polygon points="190,1175 215,1185 185,1215 155,1250 170,1280 210,1310 175,1335 150,1335 150,1250" fill="#c08000" stroke="#fff" strokeWidth="2" />
      </svg>

      <div className="h-[370px]" />
      <div className="relative ml-[79px] w-[126px] text-[#262626]">
        {legend.map((l) => (
          <div key={l.t} className={`${l.c} flex h-[17px] items-center pl-[6px] whitespace-nowrap`}>
            {l.t}
          </div>
        ))}
      </div>
      <div className="pl-[3px] leading-[17px]">
        <div>成本分布,日期: 2019/11/19</div>
        <div className="flex items-center">
          <span className="w-[57px] whitespace-nowrap">获利比例:</span>
          <div className="flex h-[17px] w-[142px] border border-white">
            <div className="flex w-[130px] items-center justify-center border border-[#ffff00] leading-none">91.8%</div>
          </div>
        </div>
        <div>-0.21处获利盘:</div>
        <div>平均成本: 2.01元</div>
        <div className="whitespace-nowrap">90%成本1.69-2.18集中14.4%</div>
        <div className="whitespace-nowrap">70%成本1.78-2.13集中10.4%</div>
      </div>

      <div className="relative mt-[3px]">
        <div className="absolute right-[1px] top-[2px] h-[55px] w-[13px] rounded-[1px] border border-[#333]">
          <div className="flex h-[14px] items-center justify-center border-b border-[#333]">
            <div className="h-0 w-0 border-x-[4px] border-b-[4px] border-x-transparent border-b-[#666]" />
          </div>
        </div>
        <div className="flex h-[22px] items-center">
          <span className="ml-[12px] h-[11px] w-[11px] border border-[#a01010]" />
          <span className="ml-[12px] w-[96px] text-[13px] whitespace-nowrap">名称(72)</span>
          <span className="text-[13px] whitespace-nowrap">涨幅%</span>
          <span className="text-[12px] leading-none text-[#ff1010]">↓</span>
        </div>
        {list.map(([n, name, pct]) => (
          <div key={n} className="flex h-[22px] items-center">
            <span className="w-[24px] text-right text-[13px] font-bold text-white">{n}</span>
            <span className="ml-[12px] w-[108px] text-[16px] whitespace-nowrap text-[#eeeeee]">{name}</span>
            <span className="text-[13px] font-bold text-[#ff3333]">{pct}</span>
          </div>
        ))}
      </div>
    </div>
  );
}

function Quote() {
  const book: { l: string; v: string; c: string; big?: boolean }[] = [
    { l: "卖五", v: "3.24", c: "text-[#ff3333]" },
    { l: "卖四", v: "3.23", c: "text-[#ff3333]" },
    { l: "卖三", v: "3.22", c: "text-white" },
    { l: "卖二", v: "3.21", c: "text-[#00c000]" },
    { l: "卖一", v: "3.20", c: "text-[#00d000]", big: true },
  ];
  const bids: { l: string; v: string; big?: boolean }[] = [
    { l: "买一", v: "3.19", big: true },
    { l: "买二", v: "3.18" },
    { l: "买三", v: "3.17" },
    { l: "买四", v: "3.16" },
    { l: "买五", v: "3.15" },
  ];
  const stats = [
    { a: "今开", v: "3.28", c: "text-[#ff3333]", b: "均价" },
    { a: "最高", v: "3.31", c: "text-[#ff3333]", b: "量比" },
    { a: "最低", v: "3.16", c: "text-[#00c000]", b: "市值" },
    { a: "现量", v: "15519", c: "text-[#b030d0]", b: "总量" },
    { a: "外盘", v: "171.2万", c: "text-[#ff3333]", b: "内盘" },
  ];
  const stats2 = [
    { a: "换手", s: "", v: "6.61%", b: "股本" },
    { a: "净资", s: "", v: "1.22", b: "流通" },
    { a: "收益", s: "(三)", v: "0.050", b: "PE(动" },
  ];
  const flows = [
    { t: "净流入额", w: "w-[21px]" },
    { t: "大宗流入", w: "w-[24px]" },
    { t: "5日净流入额", w: "w-[21px]" },
    { t: "5日大宗流入", w: "w-[24px]" },
  ];
  const prices = ["3.20", "3.20", "3.20", "3.20", "3.20", "3.20", "3.20", "3.20", "3.20", "3.20", "3.20", "3.20", "3.19", "3.20", "3.19", "3.20", "3.20", "3.20", "3.20", "3.19", "3.20", "3.21", "3.20", "3.20", "3.20"];
  const vols: Record<number, string> = { 0: "1", 8: "2", 17: "1", 20: "1", 21: "3" };
  return (
    <div className="relative min-w-0 flex-1 overflow-hidden border-l border-[#801010] text-[#e8e8e8]">
      <div className="flex h-[29px] items-center pl-[6px] whitespace-nowrap">
        <span className="font-['Liberation_Serif'] text-[14px] font-bold tracking-[6px] text-[#ff5030]">PL</span>
        <span className="ml-[1px] text-[22px] text-[#20d8f0]">利欧股份</span>
        <span className="ml-[7px] text-[13px] font-bold text-white">002131</span>
      </div>
      <div className="flex h-[27px] items-center border-b border-[#a01010] pl-[2px] whitespace-nowrap">
        <span className="text-[19px] font-bold text-[#00d000]">3.20</span>
        <span className="text-[14px]">元</span>
        <span className="ml-[28px] text-[19px] font-bold text-[#00d000]">▼-0.02</span>
      </div>
      {book.map((r) => (
        <div key={r.l} className={`flex ${r.big ? "h-[20px]" : "h-[18px]"} items-center justify-between pl-[2px] pr-[9px]`}>
          <span className="text-[16px] leading-none">{r.l}</span>
          <span className={`${r.c} font-bold ${r.big ? "text-[20px]" : "text-[14px]"}`}>{r.v}</span>
        </div>
      ))}
      <div className="flex h-[1px]">
        <div className="w-[87px] bg-[#c89030]" />
        <div className="flex-1 bg-[#1080d0]" />
      </div>
      {bids.map((r) => (
        <div key={r.l} className={`flex ${r.big ? "h-[20px]" : "h-[18px]"} items-center justify-between pl-[2px] pr-[9px]`}>
          <span className="text-[16px] leading-none">{r.l}</span>
          <span className={`font-bold text-[#00c800] ${r.big ? "text-[20px]" : "text-[14px]"}`}>{r.v}</span>
        </div>
      ))}
      <div className="h-[1px] bg-[#a01010]" />
      {stats.map((r) => (
        <div key={r.a} className="flex h-[19px] items-center pl-[2px] whitespace-nowrap">
          <span className="w-[40px] text-[16px] leading-none">{r.a}</span>
          <span className={`${r.c} w-[66px] text-right text-[14px] font-bold`}>{r.v}</span>
          <span className="ml-[7px] text-[16px] leading-none">{r.b}</span>
        </div>
      ))}
      <div className="h-[1px] bg-[#a01010]" />
      {stats2.map((r) => (
        <div key={r.a} className="flex h-[19px] items-center pl-[2px] whitespace-nowrap">
          <span className="w-[50px] text-[16px] leading-none">
            {r.a}
            <span className="text-[11px]">{r.s}</span>
          </span>
          <span className="w-[56px] text-right text-[14px] font-bold text-[#e8e8e8]">{r.v}</span>
          <span className="ml-[7px] text-[16px] leading-none">{r.b}</span>
        </div>
      ))}
      <div className="h-[3px]" />
      <div className="h-[1px] bg-[#a01010]" />
      {flows.map((r) => (
        <div key={r.t} className="flex h-[19px] items-center pl-[2px] whitespace-nowrap">
          <span className="w-[93px] text-[16px] leading-none">{r.t}</span>
          <span className={`${r.w} h-[7px] bg-[#00c800]`} />
        </div>
      ))}
      <div className="h-[4px]" />
      <div className="h-[1px] bg-[#a01010]" />
      {prices.map((p, i) => (
        <div key={i} className="flex h-[18px] items-center pl-[3px] whitespace-nowrap">
          <span className="w-[77px] text-[13px] font-bold text-[#eeeeee]">{i < 6 ? "14:55" : "14:56"}</span>
          <span className="w-[56px] text-[14px] font-bold text-[#00c000]">{p}</span>
          <span className="text-[13px] font-bold text-[#b030d0]">{vols[i] ?? ""}</span>
        </div>
      ))}
      {/* input method bar */}
      <div className="absolute right-0 top-[644px] flex h-[20px] w-[103px] items-center bg-white">
        <span className="-ml-[1px] flex h-[24px] w-[27px] -rotate-12 items-center justify-center rounded-[3px] bg-[#f4591c] text-[20px] leading-none font-black text-white">S</span>
        <span className="ml-[7px] text-[17px] leading-none font-bold text-[#1a70d0]">A</span>
        <span className="ml-[12px] text-[14px] leading-none font-bold text-[#1a70d0]">•,</span>
        <Smile className="ml-[9px] h-[15px] w-[15px] text-[#1a70d0]" strokeWidth={2} />
      </div>
    </div>
  );
}

function Banner() {
  return (
    <div className="absolute bottom-0 right-0 flex h-[91px] w-[899px] items-center bg-[#7ba6d4]/95">
      <span className="ml-[19px] w-[322px] text-[62px] leading-none font-black text-[#1a1a8c]">公式指标网</span>
      {/* site logo */}
      <svg width="110" height="91" viewBox="0 0 110 91" className="ml-[8px] shrink-0">
        <path d="M11 43.5A40 40 0 0 1 49 5" fill="none" stroke="#d9604c" strokeWidth="10" />
        <path d="M64 5A40 40 0 0 1 94 43.5" fill="none" stroke="#d9604c" strokeWidth="10" />
        <path d="M94 47A40 40 0 0 1 50 86" fill="none" stroke="#e8c040" strokeWidth="10" />
        <path d="M48 2H63V18H73V43H38V18H48Z" fill="#e8c040" />
        <circle cx="55.7" cy="7.5" r="3" fill="#7ba6d4" />
        <path d="M38 28H50V31H38ZM50 31H53V41H50ZM60 28H73V31H60Z" fill="#7ba6d4" />
        <path d="M38 47H73V52H38ZM38 55H73V60H38ZM42 62H69V67H63V89H50V67H42Z" fill="#e8c040" />
        <path d="M49 52H53V67H49ZM58 52H62V67H58ZM55 72H58V84H55Z" fill="#7ba6d4" />
        <path id="logoArc" d="M14 47A42 42 0 0 0 47 81" fill="none" />
        <text fontSize="7" fontWeight="700" fill="#ffffff">
          <textPath href="#logoArc">www.9m8.cn</textPath>
        </text>
      </svg>
      <span className="ml-[21px] font-['DejaVu_Serif'] text-[62px] leading-none font-bold tracking-[-2.6px] whitespace-nowrap text-white">www.9m8.cn</span>
    </div>
  );
}

export default function App() {
  return (
    <div className="relative flex h-[975px] w-[1800px] flex-col overflow-hidden bg-[#0a0a0a] font-['Liberation_Sans','Noto_Sans_CJK_SC',sans-serif]">
      <TopMenu />
      <div className="flex min-h-0 flex-1">
        <div className="relative w-[1449px] shrink-0">
          {/* window strip */}
          <div className="absolute left-0 top-0 h-[58px] w-[4px] bg-[#b00000]" />
          <Toolbar />
          <div className="relative h-[942px]">
            <ChartSvg />
            <ChartLegends />
            {/* leftover rect from another window */}
            <div className="absolute left-[450px] top-[410px] h-[89px] w-[900px] bg-black" />
          </div>
        </div>
        <ChipPanel />
        <Quote />
      </div>
      <Banner />
    </div>
  );
}
